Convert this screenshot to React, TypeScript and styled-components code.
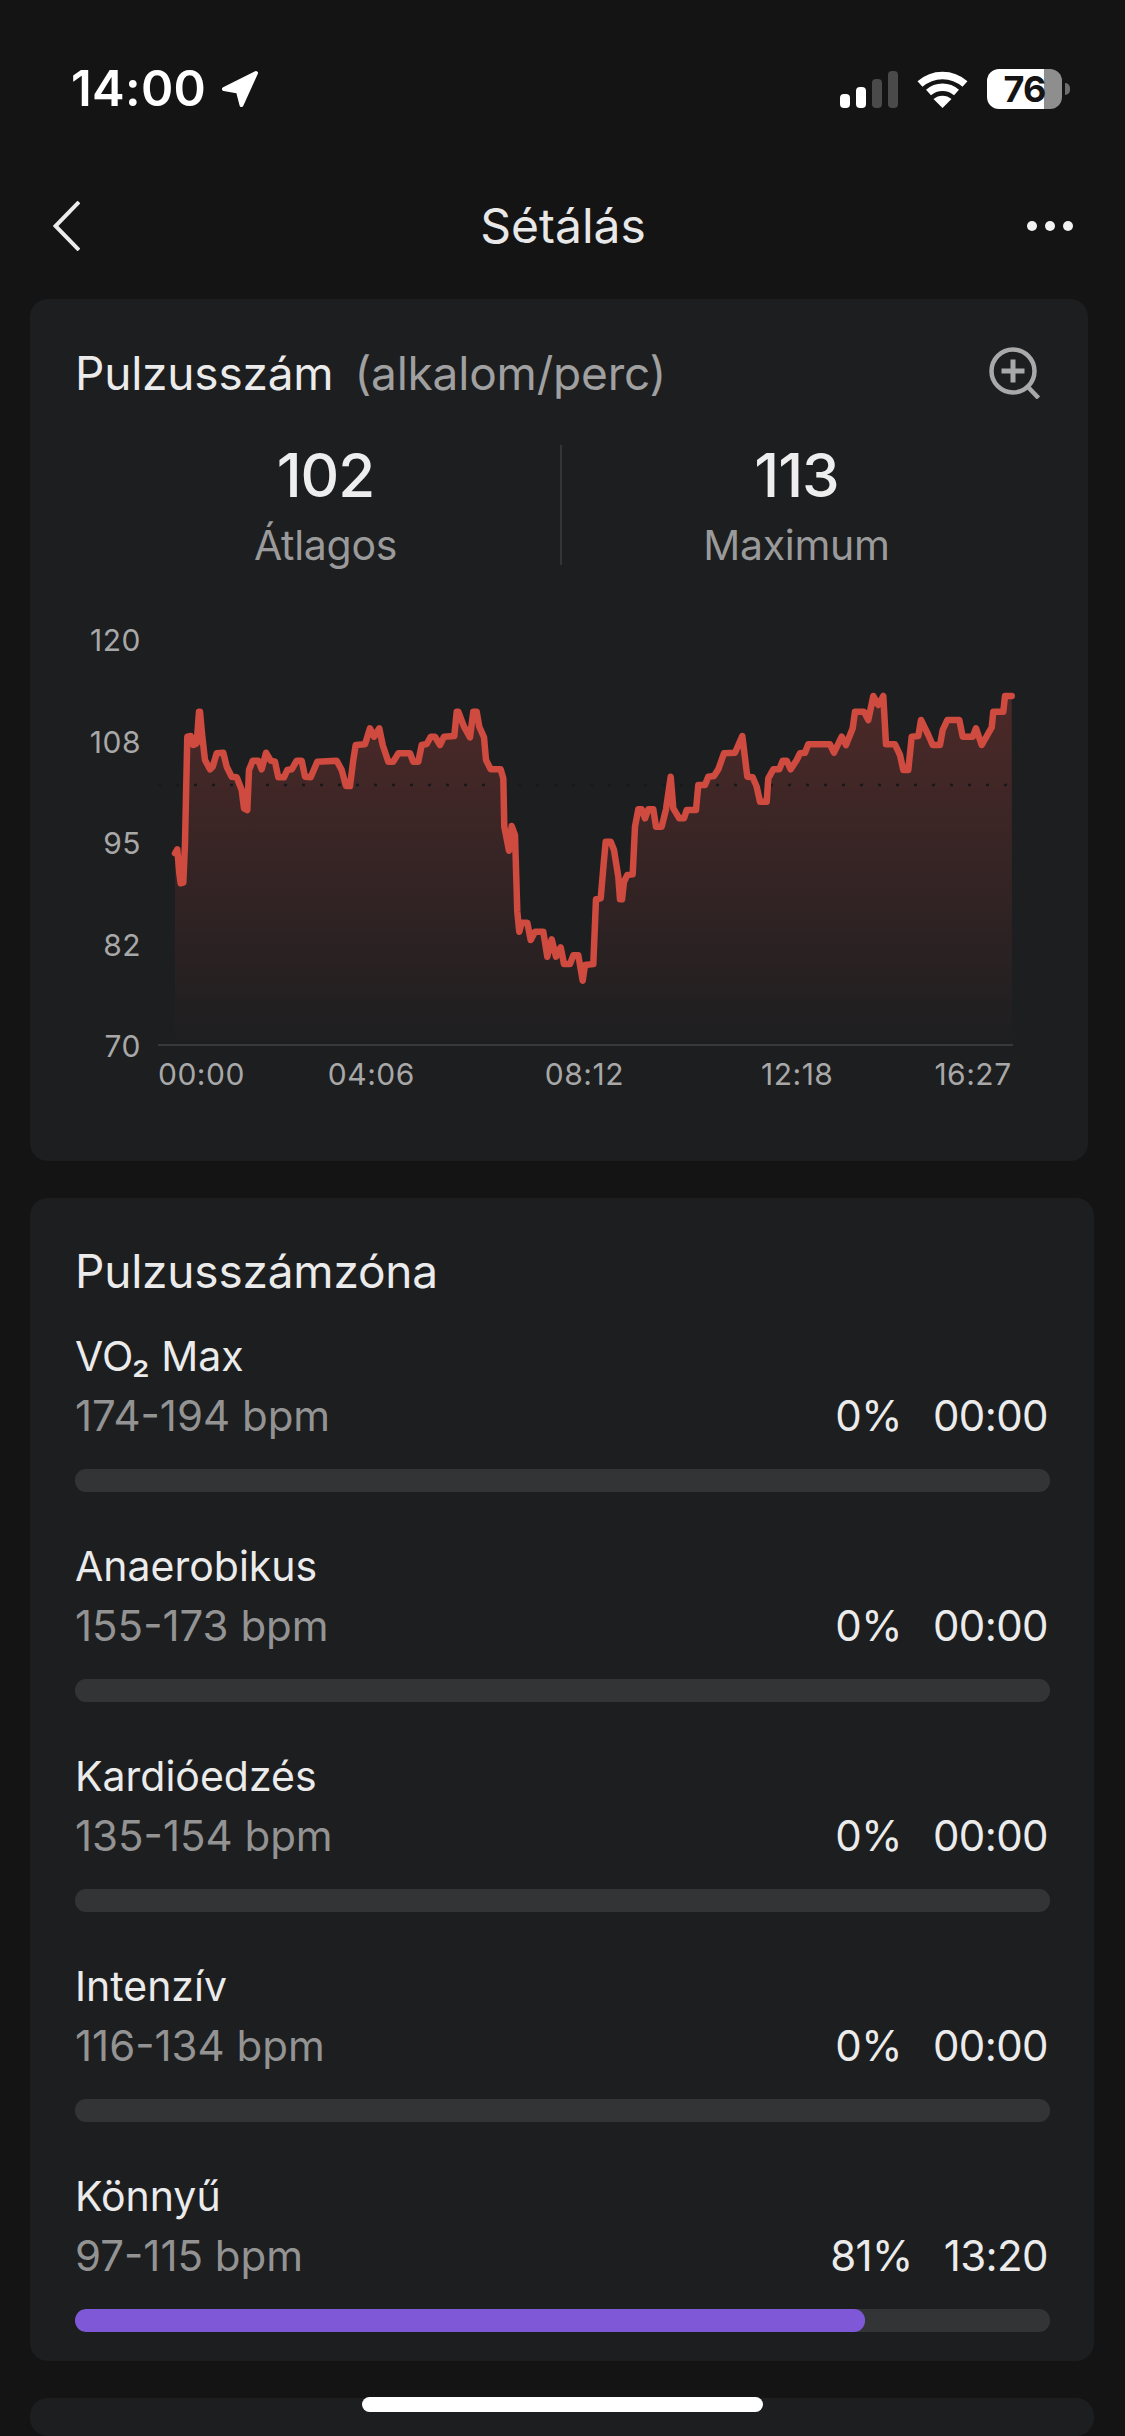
import React from "react";
import styled, { createGlobalStyle } from "styled-components";

const GlobalStyle = createGlobalStyle`
  html, body {
    margin: 0;
    padding: 0;
    background: #141414;
  }
  * {
    box-sizing: border-box;
  }
`;

const Page = styled.div`
  position: relative;
  display: flex;
  flex-direction: column;
  width: 1125px;
  height: 2436px;
  overflow: hidden;
  background: #141414;
  color: #ebebeb;
  font-family: Inter, "Liberation Sans", sans-serif;
`;

const StatusBar = styled.div`
  display: flex;
  align-items: center;
  justify-content: space-between;
  flex: none;
  height: 178px;
  padding: 0 55px 0 71px;
`;

const StatusLeft = styled.div`
  display: flex;
  align-items: center;
  gap: 15px;
`;

const Clock = styled.span`
  font-size: 49px;
  font-weight: 600;
  line-height: 50px;
  letter-spacing: 0.3px;
  color: #fff;
`;

const StatusRight = styled.div`
  display: flex;
  align-items: center;
  gap: 19px;
`;

const SignalBars = styled.div`
  display: flex;
  align-items: flex-end;
  gap: 6px;
  height: 37px;
`;

const SignalBar = styled.div<{ $height: number; $on: boolean }>`
  width: 10px;
  height: ${(p) => p.$height}px;
  border-radius: 4px;
  background: ${(p) => (p.$on ? "#fff" : "#4a4a4a")};
`;

const Battery = styled.div`
  display: flex;
  align-items: center;
  gap: 3px;
`;

const BatteryBody = styled.div`
  display: flex;
  align-items: center;
  justify-content: center;
  width: 75px;
  height: 40px;
  border-radius: 12px;
  background: linear-gradient(to right, #fff 76%, #8e8e8e 76%);
  color: #141414;
  font-size: 36px;
  font-weight: 700;
  line-height: 40px;
  letter-spacing: -1px;
`;

const BatteryCap = styled.div`
  width: 5px;
  height: 12px;
  border-radius: 0 6px 6px 0;
  background: #6e6e6e;
`;

const NavBar = styled.div`
  display: grid;
  grid-template-columns: 1fr auto 1fr;
  align-items: center;
  flex: none;
  height: 96px;
  margin-bottom: 25px;
  padding: 0 52px 0 53px;
`;

const NavTitle = styled.div`
  font-size: 48px;
  line-height: 60px;
  font-weight: 400;
  color: #e8e8e8;
`;

const Dots = styled.div`
  display: flex;
  justify-self: end;
  gap: 8px;
`;

const Dot = styled.div`
  width: 10px;
  height: 10px;
  border-radius: 50%;
  background: #f2f2f2;
`;

const Card = styled.section<{ $right: number }>`
  flex: none;
  margin: 0 ${(p) => p.$right}px 0 30px;
  border-radius: 18px;
  background: #1d1e20;
`;

const PulseCard = styled(Card)`
  height: 862px;
  padding: 48px 47px 0 45px;
`;

const CardHeader = styled.div`
  display: flex;
  align-items: center;
  justify-content: space-between;
  height: 51px;
`;

const CardTitle = styled.h2`
  margin: 0;
  font-size: 46px;
  line-height: 60px;
  font-weight: 400;
  letter-spacing: -0.2px;
  color: #ebebeb;
`;

const CardUnit = styled.span`
  margin-left: 21px;
  color: #a0a0a0;
`;

const Stats = styled.div`
  display: grid;
  grid-template-columns: 1fr 2px 1fr;
  margin-top: 47px;
  padding: 0 10px 0 16px;
`;

const Stat = styled.div`
  display: flex;
  flex-direction: column;
  align-items: center;
`;

const StatValue = styled.div`
  font-size: 60px;
  line-height: 60px;
  font-weight: 500;
  letter-spacing: -1px;
  color: #eeeeee;
`;

const StatLabel = styled.div`
  margin-top: 15px;
  font-size: 41px;
  line-height: 50px;
  letter-spacing: -0.3px;
  color: #9a9a9a;
`;

const StatDivider = styled.div`
  height: 120px;
  background: #343537;
`;

const ChartBody = styled.div`
  display: flex;
  align-items: flex-start;
  gap: 17px;
  margin-top: 56px;
`;

const YAxis = styled.div`
  display: flex;
  flex-direction: column;
  justify-content: space-between;
  align-items: flex-end;
  flex: none;
  width: 66px;
  height: 434px;
`;

const AxisLabel = styled.span<{ $offset?: number }>`
  margin-left: ${(p) => p.$offset ?? 0}px;
  font-size: 30px;
  line-height: 28px;
  letter-spacing: 0.5px;
  color: #a8a8a8;
`;

const XAxis = styled.div`
  display: flex;
  padding-left: 83px;
  line-height: 30px;
`;

const Plot = styled.svg`
  display: block;
  flex: none;
  overflow: visible;
`;

const ZoneCard = styled(Card)`
  margin-top: 37px;
  padding: 43px 44px 29px 45px;
`;

const ZoneList = styled.div`
  display: flex;
  flex-direction: column;
  gap: 44px;
  margin-top: 25px;
`;

const ZoneName = styled.div`
  font-size: 41px;
  line-height: 60px;
  color: #ebebeb;
`;

const ZoneDetail = styled.div`
  display: flex;
  justify-content: space-between;
  padding-right: 2px;
  font-size: 42px;
  line-height: 60px;
`;

const ZoneRange = styled.span`
  color: #939393;
`;

const ZoneValues = styled.div`
  display: flex;
  gap: 31px;
  letter-spacing: -0.6px;
  color: #ebebeb;
`;

const Track = styled.div`
  height: 23px;
  margin-top: 23px;
  border-radius: 11px;
  overflow: hidden;
  background: #333436;
`;

const TrackFill = styled.div`
  height: 100%;
  border-radius: 11px;
  background: #7f58d8;
`;

const NextCard = styled(Card)`
  flex: 1;
  margin-top: 37px;
`;

const HomeIndicator = styled.div`
  position: absolute;
  left: 362px;
  bottom: 24px;
  width: 401px;
  height: 15px;
  border-radius: 8px;
  background: #fff;
`;

// trace read off the chart, in page pixels
const traceLeft: [number, number][] = [
  [345, 730], [352, 718], [358, 790], [362, 820], [370, 818], [375, 700], [382, 380], [392, 378],
  [400, 405], [410, 400], [417, 305], [420, 305], [427, 380], [435, 450], [450, 478], [458, 470],
  [470, 430], [490, 428], [500, 470], [515, 500], [530, 502], [545, 540], [552, 595], [562, 600],
  [567, 480], [578, 452], [595, 452], [605, 478], [618, 428], [632, 452], [645, 455], [655, 502],
  [672, 502], [682, 480], [695, 478], [710, 452], [725, 452], [735, 500], [752, 502], [772, 455],
  [830, 452], [845, 480], [858, 528], [870, 528], [880, 450], [887, 405], [915, 403], [930, 355],
  [942, 380], [958, 355], [968, 405], [985, 455], [1000, 455], [1015, 430], [1050, 430], [1060, 455],
  [1075, 455], [1085, 405], [1100, 402], [1112, 380], [1125, 380], [1140, 405], [1152, 380], [1183, 378],
  [1190, 305], [1195, 305], [1212, 350], [1230, 382], [1240, 305], [1250, 305], [1258, 350], [1272, 382],
  [1278, 450], [1292, 478], [1322, 478], [1330, 505], [1333, 650], [1347, 722], [1355, 648], [1365, 675],
  [1372, 905], [1378, 965], [1385, 938], [1402, 938], [1412, 990], [1425, 965],
];

const traceRight: [number, number][] = [
  [-15, 965], [10, 965], [22, 1040], [35, 988], [48, 1040], [62, 1012], [72, 1062], [90, 1062],
  [100, 1036], [115, 1036], [128, 1112], [135, 1065], [160, 1062], [168, 868], [182, 865], [192, 750],
  [197, 695], [212, 695], [222, 720], [235, 800], [240, 868], [246, 868], [252, 815], [262, 795],
  [278, 793], [285, 650], [295, 598], [305, 598], [315, 625], [325, 598], [340, 598], [348, 650],
  [365, 650], [378, 598], [392, 500], [400, 595], [418, 625], [432, 625], [440, 600], [468, 600],
  [475, 525], [495, 525], [505, 500], [522, 498], [535, 478], [552, 430], [585, 428], [607, 378],
  [622, 500], [638, 502], [650, 530], [660, 575], [680, 575], [685, 505], [700, 478], [718, 478],
  [728, 452], [740, 452], [752, 478], [770, 450], [780, 430], [795, 428], [805, 403], [870, 403],
  [882, 428], [905, 380], [918, 405], [938, 355], [945, 305], [972, 305], [985, 330], [1000, 258],
  [1015, 285], [1030, 258], [1038, 403], [1065, 403], [1080, 435], [1090, 480], [1105, 480], [1115, 380],
  [1135, 378], [1143, 330], [1165, 375], [1178, 405], [1200, 405], [1208, 360], [1222, 330], [1258, 330],
  [1268, 380], [1298, 380], [1308, 355], [1325, 405], [1355, 352], [1360, 305], [1390, 305], [1395, 258],
  [1415, 258],
];

const tracePoints = [
  ...traceLeft.map(([x, y]) => [60 + x / 3, 610 + y / 3]),
  ...traceRight.map(([x, y]) => [540 + x / 3, 610 + y / 3]),
]
  .map(([x, y]) => `${x.toFixed(1)},${y.toFixed(1)}`)
  .join(" ");

const HeartChart = () => (
  <Plot width={855} height={421} viewBox="158 626 855 421">
    <defs>
      <linearGradient id="traceFill" gradientUnits="userSpaceOnUse" x1="0" y1="700" x2="0" y2="1045">
        <stop offset="0" stopColor="#d04a3f" stopOpacity="0.26" />
        <stop offset="0.6" stopColor="#d04a3f" stopOpacity="0.11" />
        <stop offset="1" stopColor="#d04a3f" stopOpacity="0" />
      </linearGradient>
    </defs>
    <polygon points={`175,1045 ${tracePoints} 1012,1045`} fill="url(#traceFill)" />
    <line x1="158" y1="785" x2="1013" y2="785" stroke="#17181a" strokeWidth="2.5" strokeDasharray="3 15" />
    <line x1="158" y1="1045" x2="1013" y2="1045" stroke="#38393b" strokeWidth="2" />
    <polyline
      points={tracePoints}
      fill="none"
      stroke="#cf4a3f"
      strokeWidth="6.5"
      strokeLinejoin="round"
      strokeLinecap="round"
    />
  </Plot>
);

const LocationArrow = () => (
  <svg width="38" height="38" viewBox="0 0 38 38">
    <path
      d="M35 3 L3 19 L17 21.5 L20.5 35 Z"
      fill="#fff"
      stroke="#fff"
      strokeWidth="4"
      strokeLinejoin="round"
    />
  </svg>
);

const WifiIcon = () => (
  <svg width="51" height="37" viewBox="0 0 51 37" fill="none" stroke="#fff" strokeWidth="7.5">
    <path d="M3 13 C16 1.5 35 1.5 48 13" />
    <path d="M11.5 21.5 C19.5 14.5 31.5 14.5 39.5 21.5" />
    <path d="M25.5 37 L16.5 28 C21.5 23.5 29.5 23.5 34.5 28 Z" fill="#fff" stroke="none" />
  </svg>
);

const BackIcon = () => (
  <svg width="27" height="50" viewBox="0 0 27 50" fill="none" stroke="#ececec" strokeWidth="4">
    <path d="M26 1 L2.5 25 L26 49" />
  </svg>
);

const ZoomInIcon = () => (
  <svg width="52" height="52" viewBox="0 0 52 52" fill="none" stroke="#a9a9a9">
    <circle cx="24" cy="24" r="21.5" strokeWidth="4.5" />
    <path d="M12.5 24 H35.5 M24 12.5 V35.5" strokeWidth="5" />
    <path d="M39 40 L49.5 51" strokeWidth="4.5" />
  </svg>
);

const signal = [
  { height: 14, on: true },
  { height: 21, on: true },
  { height: 29, on: false },
  { height: 37, on: false },
];

const axisTicks = ["120", "108", "95", "82", "70"];

const timeTicks = [
  { label: "00:00", offset: 0 },
  { label: "04:06", offset: 83 },
  { label: "08:12", offset: 130 },
  { label: "12:18", offset: 137 },
  { label: "16:27", offset: 101 },
];

const zones = [
  { name: "VO₂ Max", range: "174-194 bpm", percent: 0, time: "00:00" },
  { name: "Anaerobikus", range: "155-173 bpm", percent: 0, time: "00:00" },
  { name: "Kardióedzés", range: "135-154 bpm", percent: 0, time: "00:00" },
  { name: "Intenzív", range: "116-134 bpm", percent: 0, time: "00:00" },
  { name: "Könnyű", range: "97-115 bpm", percent: 81, time: "13:20" },
];

const App: React.FunctionComponent = (): JSX.Element => {
  return (
    <Page>
      <GlobalStyle />
      <StatusBar>
        <StatusLeft>
          <Clock>14:00</Clock>
          <LocationArrow />
        </StatusLeft>
        <StatusRight>
          <SignalBars>
            {signal.map((bar) => (
              <SignalBar key={bar.height} $height={bar.height} $on={bar.on} />
            ))}
          </SignalBars>
          <WifiIcon />
          <Battery>
            <BatteryBody>76</BatteryBody>
            <BatteryCap />
          </Battery>
        </StatusRight>
      </StatusBar>

      <NavBar>
        <BackIcon />
        <NavTitle>Sétálás</NavTitle>
        <Dots>
          <Dot />
          <Dot />
          <Dot />
        </Dots>
      </NavBar>

      <PulseCard $right={37}>
        <CardHeader>
          <CardTitle>
            Pulzusszám<CardUnit>(alkalom/perc)</CardUnit>
          </CardTitle>
          <ZoomInIcon />
        </CardHeader>
        <Stats>
          <Stat>
            <StatValue>102</StatValue>
            <StatLabel>Átlagos</StatLabel>
          </Stat>
          <StatDivider />
          <Stat>
            <StatValue>113</StatValue>
            <StatLabel>Maximum</StatLabel>
          </Stat>
        </Stats>
        <ChartBody>
          <YAxis>
            {axisTicks.map((tick) => (
              <AxisLabel key={tick}>{tick}</AxisLabel>
            ))}
          </YAxis>
          <HeartChart />
        </ChartBody>
        <XAxis>
          {timeTicks.map((tick) => (
            <AxisLabel key={tick.label} $offset={tick.offset}>
              {tick.label}
            </AxisLabel>
          ))}
        </XAxis>
      </PulseCard>

      <ZoneCard $right={31}>
        <CardTitle>Pulzusszámzóna</CardTitle>
        <ZoneList>
          {zones.map((zone) => (
            <div key={zone.name}>
              <ZoneName>{zone.name}</ZoneName>
              <ZoneDetail>
                <ZoneRange>{zone.range}</ZoneRange>
                <ZoneValues>
                  <span>{zone.percent}%</span>
                  <span>{zone.time}</span>
                </ZoneValues>
              </ZoneDetail>
              <Track>
                <TrackFill style={{ width: `${zone.percent}%` }} />
              </Track>
            </div>
          ))}
        </ZoneList>
      </ZoneCard>

      <NextCard $right={31} />
      <HomeIndicator />
    </Page>
  );
};

export default App;
